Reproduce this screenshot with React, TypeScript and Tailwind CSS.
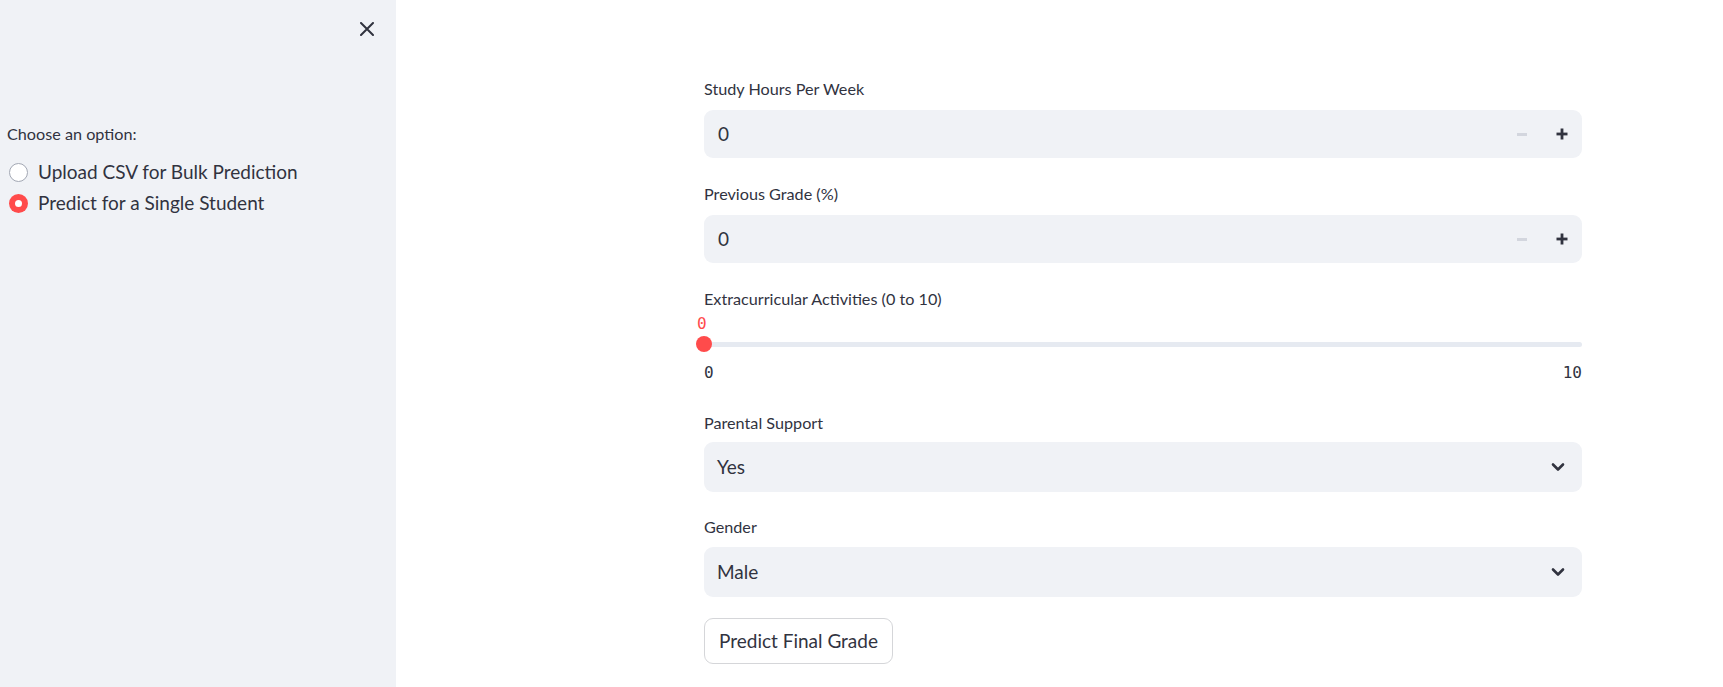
import React from "react";

const font = { fontFamily: "Lato, 'Noto Sans', sans-serif" };

function NumberInput({ value }: { value: string }) {
  return (
    <div className="flex h-[48px] w-full items-center rounded-[9px] bg-[#f0f2f6] pl-[14px]">
      <span className="flex-1 text-[19px] text-[#31333f]">{value}</span>
      <div className="flex h-full items-center">
        <div className="flex h-full w-[40px] items-center justify-center">
          <div className="h-[3px] w-[10px] bg-[#d3d6de]" />
        </div>
        <div className="relative flex h-full w-[40px] items-center justify-center">
          <svg width="12" height="12" viewBox="0 0 12 12">
            <rect x="0.5" y="4.6" width="11" height="2.8" fill="#31333f" />
            <rect x="4.6" y="0.5" width="2.8" height="11" fill="#31333f" />
          </svg>
        </div>
      </div>
    </div>
  );
}

function Select({ value }: { value: string }) {
  return (
    <div className="flex h-[50px] w-full items-center rounded-[9px] bg-[#f0f2f6] pl-[13px] pr-[17px]">
      <span className="flex-1 text-[19px] text-[#31333f]">{value}</span>
      <svg width="14" height="14" viewBox="0 0 14 14">
        <path d="M2 4.5 L7 9.5 L12 4.5" fill="none" stroke="#31333f" strokeWidth="2.6" strokeLinecap="round" strokeLinejoin="round" />
      </svg>
    </div>
  );
}

function Label({ children }: { children: React.ReactNode }) {
  return <div className="h-[24px] text-[16.2px] leading-[24px] text-[#31333f]">{children}</div>;
}

export default function App() {
  return (
    <div className="flex h-[687px] w-[1723px] overflow-hidden bg-white" style={font}>
      <aside className="relative h-full w-[396px] shrink-0 bg-[#f0f2f6]">
        <div className="flex justify-end pr-[22px] pt-[22px]">
          <svg width="14" height="14" viewBox="0 0 14 14">
            <path d="M1 1 L13 13 M13 1 L1 13" stroke="#31333f" strokeWidth="2" strokeLinecap="round" />
          </svg>
        </div>
        <div className="pl-[7px] pt-[86px]">
          <div className="h-[24px] text-[16.2px] leading-[24px] text-[#31333f]">Choose an option:</div>
          <div className="mt-[11px] flex h-[31px] items-center">
            <div className="ml-[2px] h-[19px] w-[19px] rounded-full border-[1.5px] border-[#a3a8b4] bg-white" />
            <span className="ml-[10px] text-[19px] text-[#31333f]">Upload CSV for Bulk Prediction</span>
          </div>
          <div className="flex h-[31px] items-center">
            <div className="ml-[2px] flex h-[19px] w-[19px] items-center justify-center rounded-full bg-[#ff4b4b]">
              <div className="h-[7px] w-[7px] rounded-full bg-white" />
            </div>
            <span className="ml-[10px] text-[19px] text-[#31333f]">Predict for a Single Student</span>
          </div>
        </div>
      </aside>
      <main className="h-full flex-1 pl-[308px]">
        <div className="w-[878px] pt-[77px]">
          <Label>Study Hours Per Week</Label>
          <div className="mt-[9px]">
            <NumberInput value="0" />
          </div>
          <div className="mt-[24px]">
            <Label>Previous Grade (%)</Label>
          </div>
          <div className="mt-[9px]">
            <NumberInput value="0" />
          </div>
          <div className="mt-[24px]">
            <Label>Extracurricular Activities (0 to 10)</Label>
          </div>
          <div className="mt-[3px] h-[20px] text-[16px] leading-[20px] text-[#ff4b4b]" style={{ fontFamily: "'DejaVu Sans Mono', monospace" }}>
            <span className="ml-[-7px]">0</span>
          </div>
          <div className="relative flex h-[20px] items-center">
            <div className="h-[5px] w-full rounded-full bg-[#e6eaf1]" />
            <div className="absolute left-[-8px] top-[2px] h-[16px] w-[16px] rounded-full bg-[#ff4b4b]" />
          </div>
          <div className="mt-[9px] flex h-[20px] justify-between text-[16px] leading-[20px] text-[#31333f]" style={{ fontFamily: "'DejaVu Sans Mono', monospace" }}>
            <span>0</span>
            <span>10</span>
          </div>
          <div className="mt-[28px]">
            <Label>Parental Support</Label>
          </div>
          <div className="mt-[7px]">
            <Select value="Yes" />
          </div>
          <div className="mt-[23px]">
            <Label>Gender</Label>
          </div>
          <div className="mt-[8px]">
            <Select value="Male" />
          </div>
          <button className="mt-[21px] h-[46px] w-[189px] rounded-[9px] border border-[#d5d6d9] bg-white text-[19px] text-[#31333f]">
            Predict Final Grade
          </button>
        </div>
      </main>
    </div>
  );
}
